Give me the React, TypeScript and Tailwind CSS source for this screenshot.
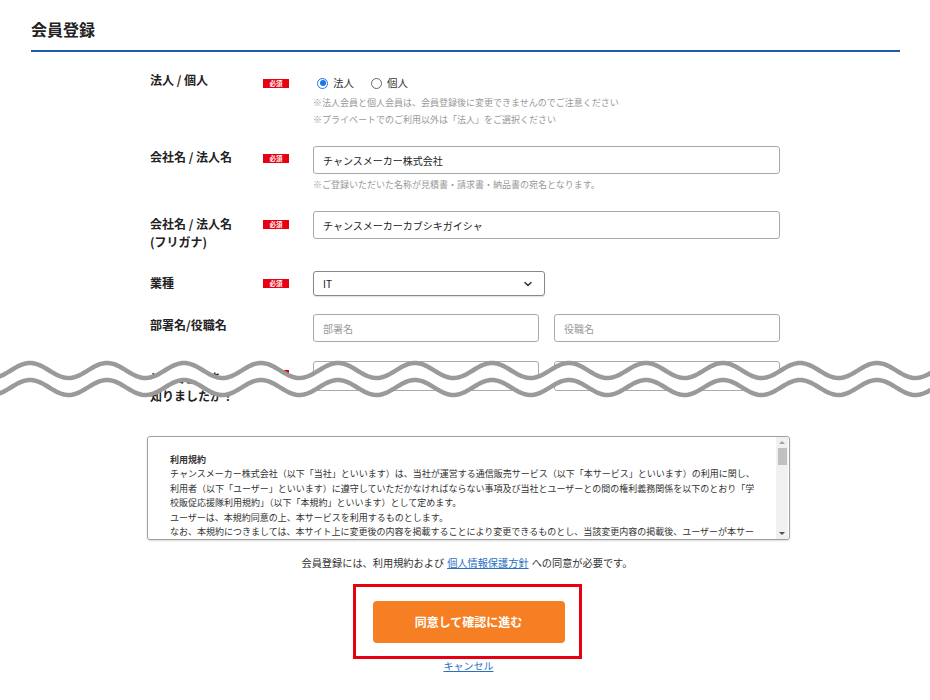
import { ChevronDown } from "lucide-react";

const TERMS = [
  "チャンスメーカー株式会社（以下「当社」といいます）は、当社が運営する通信販売サービス（以下「本サービス」といいます）の利用に関し、",
  "利用者（以下「ユーザー」といいます）に遵守していただかなければならない事項及び当社とユーザーとの間の権利義務関係を以下のとおり「学",
  "校販促応援隊利用規約」（以下「本規約」といいます）として定めます。",
  "ユーザーは、本規約同意の上、本サービスを利用するものとします。",
  "なお、本規約につきましては、本サイト上に変更後の内容を掲載することにより変更できるものとし、当該変更内容の掲載後、ユーザーが本サー",
  "ビスを利用した場合には、ユーザーは変更後の本規約に同意したものとみなします。",
];

function Badge({ className }: { className: string }) {
  return (
    <span
      className={`flex h-[9px] w-[26px] items-center justify-center bg-[#e60012] text-[6.5px] font-bold leading-none text-white ${className}`}
    >
      必須
    </span>
  );
}

function Radio({ checked, label }: { checked: boolean; label: string }) {
  return (
    <label className="flex items-center gap-[5px]">
      {checked ? (
        <span className="flex h-[11px] w-[11px] items-center justify-center rounded-full border-[1.5px] border-[#1a73e8]">
          <span className="h-[6px] w-[6px] rounded-full bg-[#1a73e8]" />
        </span>
      ) : (
        <span className="h-[11px] w-[11px] rounded-full border border-[#666]" />
      )}
      <span className="text-[10.5px] text-[#333]">{label}</span>
    </label>
  );
}

function waveY(x: number, cy: number) {
  return cy - 7.5 * Math.cos((2 * Math.PI * (x - 30)) / 77);
}

function wave(cy: number) {
  let d = "";
  for (let x = -4; x <= 934; x += 2) {
    d += `${x === -4 ? "M" : "L"}${x} ${waveY(x, cy).toFixed(2)} `;
  }
  return d;
}

function CutMark() {
  const top = wave(18.5);
  const bottom = wave(35.5);
  // fill between the two waves so the cut reads as a gap
  let back = "";
  for (let x = 934; x >= -4; x -= 2) {
    back += `L${x} ${waveY(x, 35.5).toFixed(2)} `;
  }
  return (
    <svg
      className="pointer-events-none absolute left-0 top-[352px]"
      width="930"
      height="56"
      viewBox="0 0 930 56"
    >
      <path d={`${top}${back}Z`} fill="#fff" />
      <path d={top} fill="none" stroke="#9a9a9a" strokeWidth="4.5" />
      <path d={bottom} fill="none" stroke="#9a9a9a" strokeWidth="4.5" />
    </svg>
  );
}

export default function App() {
  return (
    <div className="relative h-[700px] w-[930px] overflow-hidden bg-white font-['Noto_Sans_CJK_JP',sans-serif] text-[#222]">
      <div className="ml-[31px] mr-[30px] border-b-2 border-[#1f5aa6] pb-[10px] pt-[18px]">
        <h1 className="text-[16px] font-bold leading-[22px]">会員登録</h1>
      </div>

      <div className="pl-[150px]">
        {/* 法人 / 個人 */}
        <div className="mt-[19px] flex items-start">
          <div className="w-[113px] shrink-0 text-[12px] font-bold leading-[18px]">法人&nbsp;/&nbsp;個人</div>
          <div className="w-[50px] shrink-0">
            <Badge className="mt-[8px]" />
          </div>
          <div className="w-[467px]">
            <div className="mt-[3px] flex h-[18px] items-center gap-[17px] pl-[4px]">
              <Radio checked label="法人" />
              <Radio checked={false} label="個人" />
            </div>
            <p className="mt-[2px] text-[9px] leading-[17px] text-[#999]">
              ※法人会員と個人会員は、会員登録後に変更できませんのでご注意ください
            </p>
            <p className="text-[9px] leading-[17px] text-[#999]">
              ※プライベートでのご利用以外は「法人」をご選択ください
            </p>
          </div>
        </div>

        {/* 会社名 */}
        <div className="mt-[18px] flex items-start">
          <div className="mt-[2px] w-[113px] shrink-0 text-[12px] font-bold leading-[18px]">会社名&nbsp;/&nbsp;法人名</div>
          <div className="w-[50px] shrink-0">
            <Badge className="mt-[8px]" />
          </div>
          <div className="w-[467px]">
            <div className="flex h-[28px] items-center rounded-[3px] border border-[#aaa] px-[9px] text-[10px]">
              チャンスメーカー株式会社
            </div>
            <p className="mt-[5px] text-[9px] leading-[12px] text-[#999]">
              ※ご登録いただいた名称が見積書・請求書・納品書の宛名となります。
            </p>
          </div>
        </div>

        {/* フリガナ */}
        <div className="mt-[20px] flex items-start">
          <div className="mt-[4px] w-[113px] shrink-0 text-[12px] font-bold leading-[18px]">
            会社名&nbsp;/&nbsp;法人名
            <br />
            (フリガナ)
          </div>
          <div className="w-[50px] shrink-0">
            <Badge className="mt-[9px]" />
          </div>
          <div className="flex h-[28px] w-[467px] items-center rounded-[3px] border border-[#aaa] px-[9px] text-[10px]">
            チャンスメーカーカブシキガイシャ
          </div>
        </div>

        {/* 業種 */}
        <div className="mt-[20px] flex items-start">
          <div className="mt-[3px] w-[113px] shrink-0 text-[12px] font-bold leading-[18px]">業種</div>
          <div className="w-[50px] shrink-0">
            <Badge className="mt-[8px]" />
          </div>
          <div className="flex h-[25px] w-[232px] items-center justify-between rounded-[3px] border border-[#888] pl-[9px] pr-[10px] text-[10px] shadow-[0_1px_1px_rgba(0,0,0,0.12)]">
            <span>IT</span>
            <ChevronDown size={12} strokeWidth={3} color="#333" />
          </div>
        </div>

        {/* 部署名/役職名 */}
        <div className="mt-[18px] flex items-start">
          <div className="mt-[2px] w-[163px] shrink-0 text-[12px] font-bold leading-[18px]">部署名/役職名</div>
          <div className="flex w-[467px] gap-[15px]">
            <div className="flex h-[28px] flex-1 items-center rounded-[3px] border border-[#aaa] px-[9px] text-[10px] text-[#999]">
              部署名
            </div>
            <div className="flex h-[28px] flex-1 items-center rounded-[3px] border border-[#aaa] px-[9px] text-[10px] text-[#999]">
              役職名
            </div>
          </div>
        </div>

        {/* 知ったきっかけ */}
        <div className="mt-[19px] flex items-start">
          <div className="mt-[8px] w-[113px] shrink-0 text-[12px] font-bold leading-[18px]">
            どこで当社を
            <br />
            知りましたか？
          </div>
          <div className="w-[50px] shrink-0">
            <Badge className="mt-[9px]" />
          </div>
          <div className="flex w-[467px] gap-[15px]">
            <div className="h-[30px] flex-1 rounded-[3px] border border-[#aaa]" />
            <div className="h-[30px] flex-1 rounded-[3px] border border-[#aaa]" />
          </div>
        </div>
      </div>

      {/* 利用規約 */}
      <div className="ml-[147px] mt-[31px] flex h-[104px] w-[643px] overflow-hidden rounded-[3px] border border-[#a0a0a0] shadow-[0_1px_2px_rgba(0,0,0,0.15)]">
        <div className="flex-1 overflow-hidden pl-[22px] pt-[16px] text-[9px] leading-[14.4px] text-[#333]">
          <p className="font-bold">利用規約</p>
          {TERMS.map((line) => (
            <p key={line} className="whitespace-nowrap">
              {line}
            </p>
          ))}
        </div>
        <div className="mr-[1px] flex w-[12px] shrink-0 flex-col items-center bg-[#f1f1f1]">
          <span className="mt-[4px] h-0 w-0 border-x-[3px] border-b-[3px] border-x-transparent border-b-[#a3a3a3]" />
          <span className="mt-[4px] h-[17px] w-[9px] bg-[#c1c1c1]" />
          <span className="mb-[4px] mt-auto h-0 w-0 border-x-[3px] border-t-[3px] border-x-transparent border-t-[#505050]" />
        </div>
      </div>

      <div className="flex flex-col items-center pl-[4px]">
        <p className="mt-[15px] text-[10.2px] leading-[15px] text-[#333]">
          会員登録には、利用規約および
          <a className="mx-[3px] text-[#2a6fc0] underline">個人情報保護方針</a>
          への同意が必要です。
        </p>
        <div className="mt-[14px] border-[3px] border-[#e60012] pb-[13px] pl-[17px] pr-[14px] pt-[14px]">
          <button className="flex h-[42px] w-[192px] items-center justify-center rounded-[4px] bg-[#f57f22] text-[12px] font-bold text-white">
            同意して確認に進む
          </button>
        </div>
        <a className="ml-[3px] text-[10px] leading-[13px] text-[#2a6fc0] underline">キャンセル</a>
      </div>

      <CutMark />
    </div>
  );
}
